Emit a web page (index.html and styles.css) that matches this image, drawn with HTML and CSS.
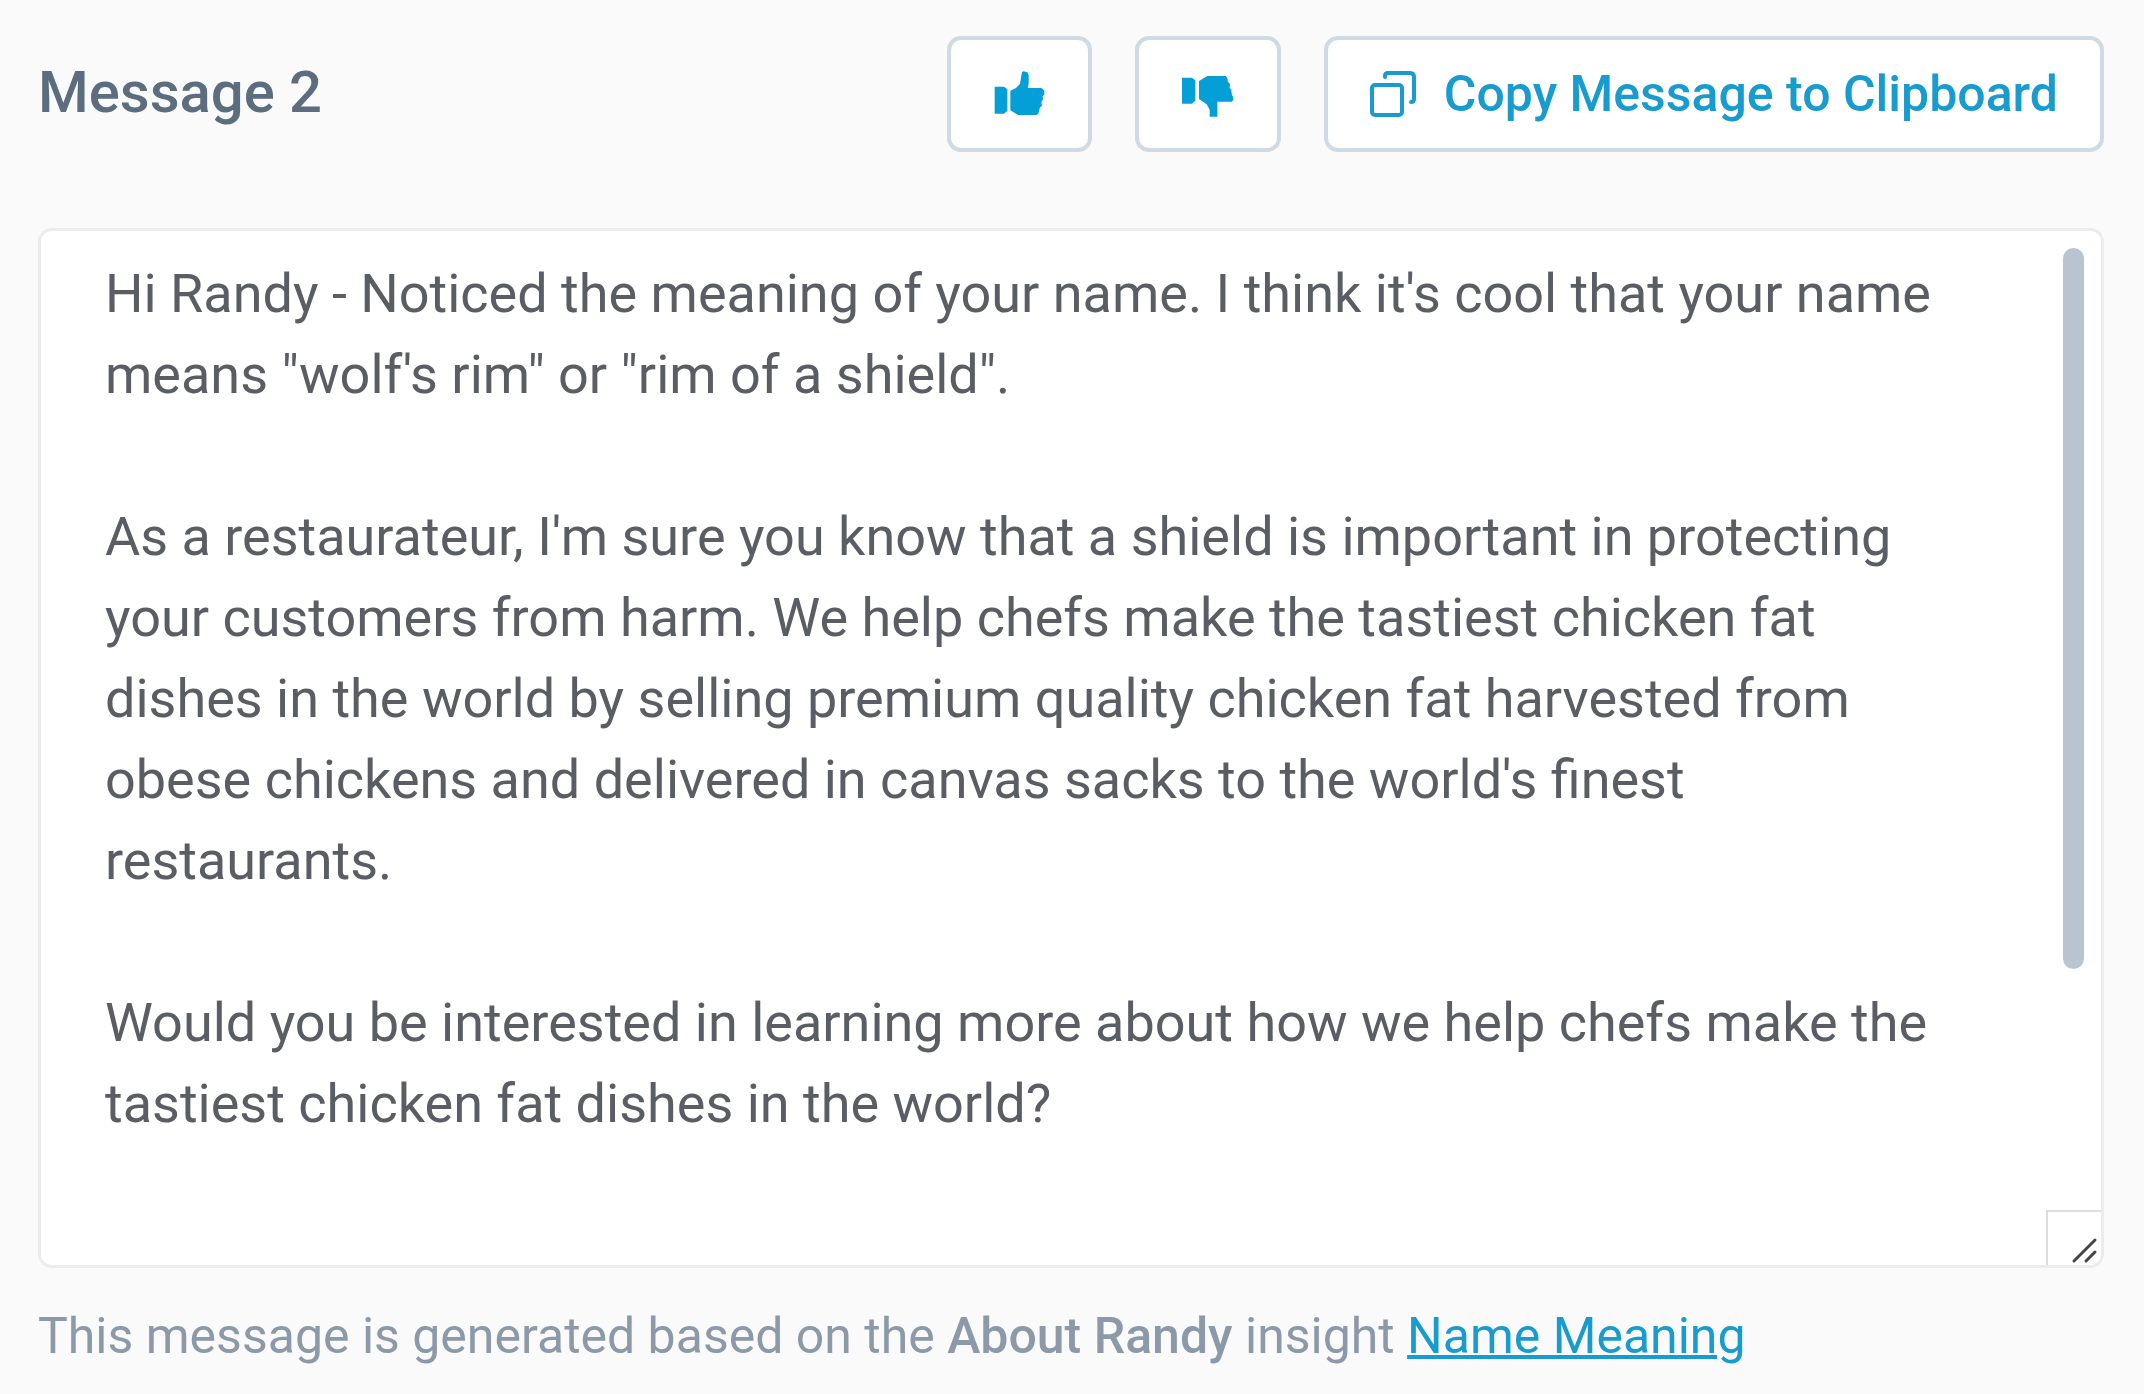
FILE: index.html
```html
<!DOCTYPE html>
<html lang="en">

    <head>
        <meta charset="UTF-8">
        <meta name="viewport" content="width=device-width, initial-scale=1.0">

        <title>Message 2</title>

        <link rel="stylesheet" href="styles.css">
    </head>

    <body>
        <main class="message">
            <div class="message-header">
                <h2 class="message-title"><label for="message_text">Message 2</label></h2>
                <div class="message-actions">
                    <button class="btn" type="button" aria-label="Like message">
                        <svg class="icon-thumb" viewBox="190 154 152 138" fill="currentColor" aria-hidden="true">
                            <path d="M192 201H220L230 209V273L220 282H192Z"/>
                            <path d="M239 213L256 205L268 192L274 157L279 155L290 158L294 166V192L291 205H332L341 212V224L336 230L337 240L332 246L334 258L328 263L323 282L317 286H262L239 272Z"/>
                        </svg>
                    </button>
                    <button class="btn" type="button" aria-label="Dislike message">
                        <svg class="icon-thumb" viewBox="754 154 156 138" fill="currentColor" aria-hidden="true">
                            <path d="M754 174H784L794 182V243L784 252H754Z"/>
                            <path d="M805 184L830 169H885L890 174L892 187L898 192L897 205L902 210L903 222L908 234V241L903 246H860V291H837V270L828 254L805 238Z"/>
                        </svg>
                    </button>
                    <button class="btn btn-copy" type="button">
                        <svg class="icon-copy" viewBox="0 0 46 46" fill="none" stroke="currentColor" stroke-width="4" stroke-linecap="round" aria-hidden="true">
                            <rect x="2" y="14" width="30" height="30" rx="3"/>
                            <path d="M15 6V5Q15 2 18 2H40Q44 2 44 6V28Q44 31 41 31"/>
                        </svg>
                        Copy Message to Clipboard
                    </button>
                </div>
            </div>

            <div class="message-box">
                <textarea id="message_text" class="message-text" spellcheck="false">Hi Randy - Noticed the meaning of your name. I think it's cool that your name means "wolf's rim" or "rim of a shield".

As a restaurateur, I'm sure you know that a shield is important in protecting your customers from harm. We help chefs make the tastiest chicken fat dishes in the world by selling premium quality chicken fat harvested from obese chickens and delivered in canvas sacks to the world's finest restaurants.

Would you be interested in learning more about how we help chefs make the tastiest chicken fat dishes in the world?</textarea>
                <div class="scroll-thumb"></div>
                <svg class="resize-handle" viewBox="0 0 53 53" fill="none" stroke="#444444" stroke-width="3" stroke-linecap="round" aria-hidden="true">
                    <path d="M26 49L47 28M38 49L47 40"/>
                </svg>
            </div>

            <p class="message-source">This message is generated based on the <b>About Randy</b> insight <a href="#">Name Meaning</a></p>
        </main>
    </body>

</html>
```

FILE: styles.css
```css
html, body
{
    margin: 0;
    padding: 0;
    background-color: #fafafa;
    font-family: Roboto, "Liberation Sans", sans-serif;
}

.message
{
    padding: 36px 40px 0 38px;
}

.message-header
{
    display: flex;
    align-items: flex-start;
    justify-content: space-between;
    margin-bottom: 76px;
}

.message-title
{
    margin: 0;
    font-size: 58px;
    font-weight: 500;
    line-height: 112px;
    color: #5b6d7e;
}

.message-actions
{
    display: flex;
    gap: 43px;
}

.btn
{
    display: flex;
    align-items: center;
    gap: 28px;
    height: 116px;
    padding: 0 43px;
    border: 4px solid #cfdae4;
    border-radius: 14px;
    background-color: #ffffff;
    font-family: inherit;
    font-size: 50px;
    font-weight: 500;
    color: #189bcf;
    cursor: pointer;
}

.btn:hover
{
    border-color: #189bcf;
}

.btn-copy
{
    padding: 0 42px;
}

.icon-thumb
{
    height: 46px;
    color: #049fd6;
}

.icon-copy
{
    width: 46px;
    height: 46px;
}

.message-box
{
    position: relative;
}

.message-text
{
    display: block;
    box-sizing: border-box;
    width: 100%;
    height: 1040px;
    padding: 22px 124px 22px 64px;
    border: 3px solid #ececec;
    border-radius: 14px;
    outline: none;
    resize: none;
    scrollbar-width: none;
    background-color: #ffffff;
    font-family: inherit;
    font-size: 54px;
    line-height: 81px;
    color: #5a5d63;
}

/* own scrollbar and handle, drawn over the text box */
.scroll-thumb
{
    position: absolute;
    top: 20px;
    right: 20px;
    width: 21px;
    height: 721px;
    border-radius: 11px;
    background-color: #b8c4cf;
}

.resize-handle
{
    position: absolute;
    right: 3px;
    bottom: 3px;
    width: 53px;
    height: 53px;
    border-top: 2px solid #dddddd;
    border-left: 2px solid #dddddd;
    border-bottom-right-radius: 11px;
    background-color: #ffffff;
    cursor: nwse-resize;
}

.message-source
{
    margin: 28px 0 0;
    font-size: 50px;
    line-height: 80px;
    color: #8b99a9;
}

.message-source b
{
    font-weight: 500;
}

.message-source a
{
    color: #189bcf;
    text-decoration-thickness: 4px;
}
```
